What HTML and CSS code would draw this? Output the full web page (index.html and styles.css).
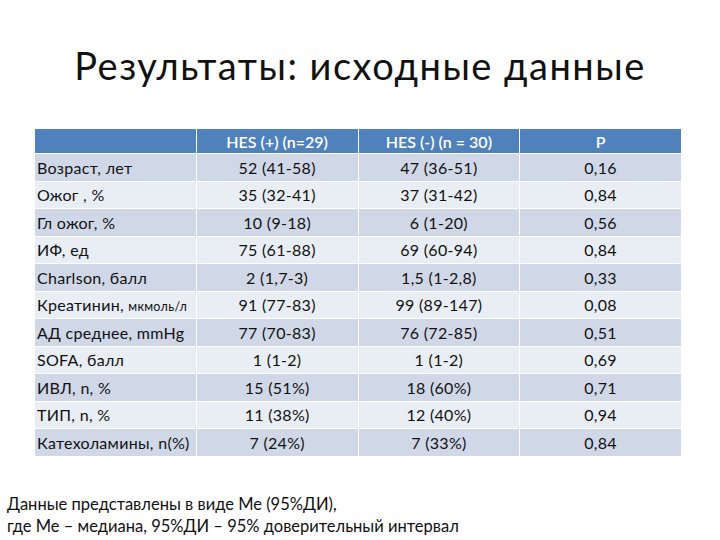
FILE: index.html
```html
<!DOCTYPE html>
<html lang="ru">
<head>
<meta charset="utf-8">
<link rel="stylesheet" href="styles.css">
</head>
<body>
<div class="slide">
  <h1 class="title">Результаты: исходные данные</h1>
  <table class="data">
    <thead>
      <tr><th></th><th>HES (+) (n=29)</th><th>HES (-) (n = 30)</th><th>P</th></tr>
    </thead>
    <tbody>
      <tr><td>Возраст, лет</td><td>52 (41-58)</td><td>47 (36-51)</td><td>0,16</td></tr>
      <tr><td>Ожог , %</td><td>35 (32-41)</td><td>37 (31-42)</td><td>0,84</td></tr>
      <tr><td>Гл ожог, %</td><td>10 (9-18)</td><td>6 (1-20)</td><td>0,56</td></tr>
      <tr><td>ИФ, ед</td><td>75 (61-88)</td><td>69 (60-94)</td><td>0,84</td></tr>
      <tr><td>Charlson, балл</td><td>2 (1,7-3)</td><td>1,5 (1-2,8)</td><td>0,33</td></tr>
      <tr><td>Креатинин, <span class="small">мкмоль/л</span></td><td>91 (77-83)</td><td>99 (89-147)</td><td>0,08</td></tr>
      <tr><td>АД среднее, mmHg</td><td>77 (70-83)</td><td>76 (72-85)</td><td>0,51</td></tr>
      <tr><td>SOFA, балл</td><td>1 (1-2)</td><td>1 (1-2)</td><td>0,69</td></tr>
      <tr><td>ИВЛ, n, %</td><td>15 (51%)</td><td>18 (60%)</td><td>0,71</td></tr>
      <tr><td>ТИП, n, %</td><td>11 (38%)</td><td>12 (40%)</td><td>0,94</td></tr>
      <tr><td>Катехоламины, n(%)</td><td>7 (24%)</td><td>7 (33%)</td><td>0,84</td></tr>
    </tbody>
  </table>
  <p class="note">Данные представлены в виде Ме (95%ДИ),<br>где Ме – медиана, 95%ДИ – 95% доверительный интервал</p>
</div>
</body>
</html>
```
FILE: styles.css
```css
html, body {
  margin: 0;
  padding: 0;
  background: #ffffff;
}
.slide {
  width: 720px;
  height: 540px;
  position: relative;
  font-family: Lato, "Open Sans", "Liberation Sans", sans-serif;
  color: #000;
  overflow: hidden;
}
.title {
  margin: 0;
  padding-top: 42px;
  height: 84px;
  box-sizing: border-box;
  text-align: center;
  font-weight: 400;
  font-size: 38px;
  letter-spacing: 1.5px;
  line-height: 46px;
  color: #111;
}
.data {
  margin: 44px 0 0 34px;
  width: 648px;
  border-collapse: collapse;
  table-layout: fixed;
  font-size: 16px;
  letter-spacing: 0.3px;
  color: #111;
}
.data th, .data td {
  border: 1px solid #ffffff;
  padding: 0 2px;
  height: 26.5px;
  text-align: center;
  white-space: nowrap;
}
.data th {
  background: #4f81bd;
  color: #ffffff;
  font-weight: 600;
  height: 24px;
  letter-spacing: 0;
}
.data td:first-child {
  text-align: left;
}
.data tbody tr:nth-child(odd) td {
  background: #d0d8e8;
}
.data tbody tr:nth-child(even) td {
  background: #e9edf4;
}
.small {
  font-size: 12.5px;
}
.note {
  margin: 36px 0 0 7px;
  font-size: 16.5px;
  line-height: 22px;
  color: #111;
}
```
